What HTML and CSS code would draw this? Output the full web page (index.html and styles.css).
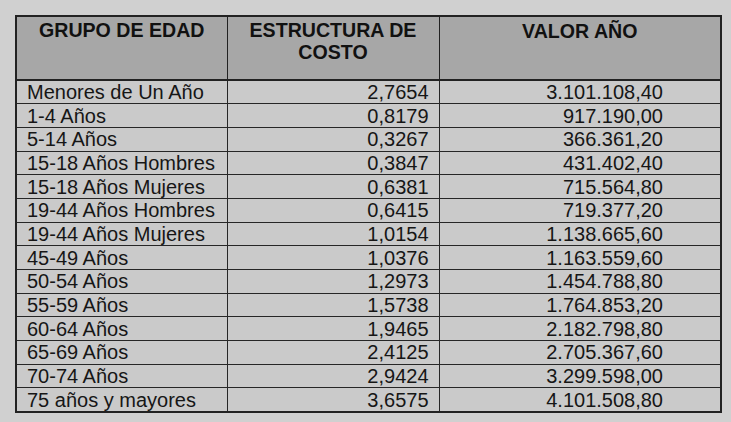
FILE: index.html
```html
<!DOCTYPE html>
<html lang="es">
<head>
<meta charset="utf-8">
<title>Tabla de costos por grupo de edad</title>
<link rel="stylesheet" href="styles.css">
</head>
<body>
<div class="sheet">
  <table class="costs">
    <colgroup>
      <col class="c1"><col class="c2"><col class="c3">
    </colgroup>
    <thead>
      <tr>
        <th>GRUPO DE EDAD</th>
        <th>ESTRUCTURA DE<br>COSTO</th>
        <th class="h3">VALOR AÑO</th>
      </tr>
    </thead>
    <tbody>
      <tr><td>Menores de Un Año</td><td class="n">2,7654</td><td class="v">3.101.108,40</td></tr>
      <tr><td>1-4 Años</td><td class="n">0,8179</td><td class="v">917.190,00</td></tr>
      <tr><td>5-14 Años</td><td class="n">0,3267</td><td class="v">366.361,20</td></tr>
      <tr><td>15-18 Años Hombres</td><td class="n">0,3847</td><td class="v">431.402,40</td></tr>
      <tr><td>15-18 Años Mujeres</td><td class="n">0,6381</td><td class="v">715.564,80</td></tr>
      <tr><td>19-44 Años Hombres</td><td class="n">0,6415</td><td class="v">719.377,20</td></tr>
      <tr><td>19-44 Años Mujeres</td><td class="n">1,0154</td><td class="v">1.138.665,60</td></tr>
      <tr><td>45-49 Años</td><td class="n">1,0376</td><td class="v">1.163.559,60</td></tr>
      <tr><td>50-54 Años</td><td class="n">1,2973</td><td class="v">1.454.788,80</td></tr>
      <tr><td>55-59 Años</td><td class="n">1,5738</td><td class="v">1.764.853,20</td></tr>
      <tr><td>60-64 Años</td><td class="n">1,9465</td><td class="v">2.182.798,80</td></tr>
      <tr><td>65-69 Años</td><td class="n">2,4125</td><td class="v">2.705.367,60</td></tr>
      <tr><td>70-74 Años</td><td class="n">2,9424</td><td class="v">3.299.598,00</td></tr>
      <tr><td>75 años y mayores</td><td class="n">3,6575</td><td class="v">4.101.508,80</td></tr>
    </tbody>
  </table>
</div>
</body>
</html>
```
FILE: styles.css
```css
html, body {
  margin: 0;
  padding: 0;
}
body {
  background: #d0d0d0;
  font-family: "Liberation Sans", Arial, sans-serif;
  color: #1e1e1e;
  width: 731px;
  height: 422px;
  overflow: hidden;
}
.sheet {
  padding: 15px 0 0 15px;
}
.costs {
  border-collapse: collapse;
  table-layout: fixed;
  width: 705px;
  border: 2px solid #222;
}
.c1 { width: 211px; }
.c2 { width: 212px; }
.c3 { width: 282px; }
.costs th {
  background: #a7a7a7;
  height: 64px;
  box-sizing: border-box;
  padding: 2px 2px 0;
  vertical-align: top;
  text-align: center;
  font-weight: bold;
  font-size: 19.6px;
  line-height: 22px;
  color: #111;
  border: 1.5px solid #222;
  border-bottom-width: 2px;
}
.costs th.h3 {
  padding-top: 3px;
}
.costs td {
  background: #cacaca;
  height: 23.7px;
  box-sizing: border-box;
  padding: 0 10px;
  font-size: 20px;
  line-height: 22px;
  border: 1.5px solid #262626;
  white-space: nowrap;
  color: #161616;
}
.costs td.n {
  text-align: right;
  padding-right: 10px;
}
.costs td.v {
  text-align: right;
  padding-right: 57px;
}
```
